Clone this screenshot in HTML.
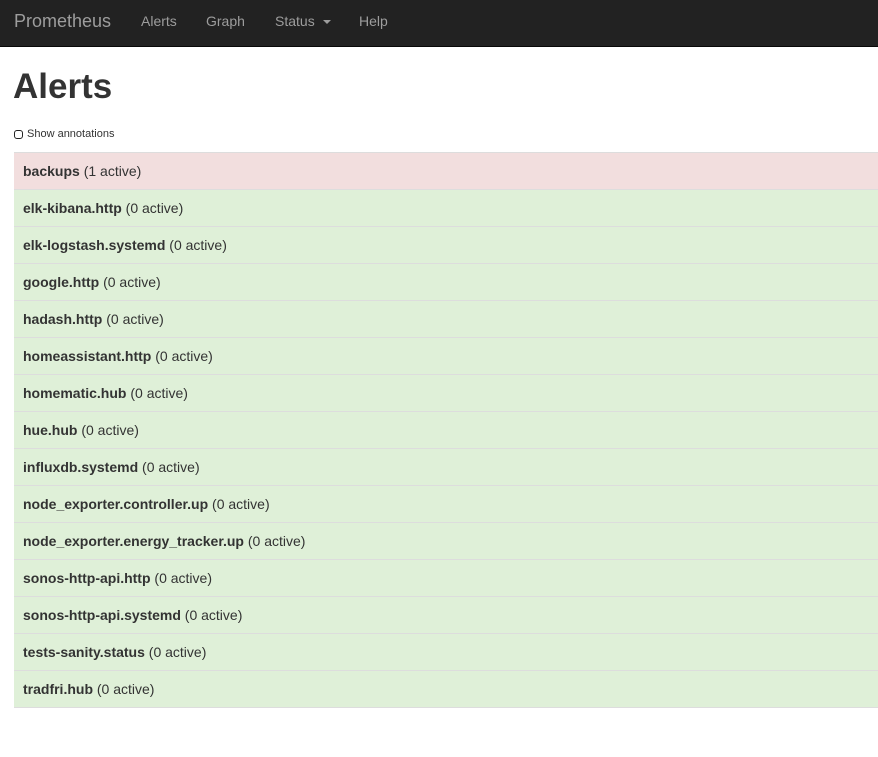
<!DOCTYPE html>
<html><head><style>
body{margin:0;font-family:"Liberation Sans",Arial,sans-serif;color:#333;font-size:14px;background:#fff;overflow:hidden;width:878px;height:757px}
.nav{height:46px;background:#222;border-bottom:1px solid #080808;position:relative}
.nav span{position:absolute;top:13px;color:#9d9d9d;font-size:14px}
.brand{font-size:18px!important;top:11px!important;left:14px}
h1{font-size:35px;font-weight:bold;margin:0;position:absolute;top:67px;left:13px;line-height:40px}
.ann{position:absolute;top:128px;left:14px;font-size:11px;display:flex;align-items:center}
.cb{width:7px;height:7px;border:1.5px solid #222;border-radius:3px;margin-right:4px}
.list{position:absolute;top:152px;left:14px;width:880px}
.row{height:36px;line-height:37px;border-top:1px solid #ddd;padding-left:9px;background:#dff0d8;font-size:14px}
.row.red{background:#f2dede}
.row:last-child{border-bottom:1px solid #ddd}
b{font-weight:bold}
.caret{display:inline-block;width:0;height:0;border-left:4px solid transparent;border-right:4px solid transparent;border-top:4px solid #9d9d9d;vertical-align:middle;margin-left:4px}
</style></head><body>
<div class="nav">
<span class="brand">Prometheus</span>
<span style="left:141px">Alerts</span>
<span style="left:206px">Graph</span>
<span style="left:275px">Status <i class="caret"></i></span>
<span style="left:359px">Help</span>
</div>
<h1>Alerts</h1>
<div class="ann"><div class="cb"></div>Show annotations</div>
<div class="list">
<div class="row red"><b>backups</b> (1 active)</div>
<div class="row"><b>elk-kibana.http</b> (0 active)</div>
<div class="row"><b>elk-logstash.systemd</b> (0 active)</div>
<div class="row"><b>google.http</b> (0 active)</div>
<div class="row"><b>hadash.http</b> (0 active)</div>
<div class="row"><b>homeassistant.http</b> (0 active)</div>
<div class="row"><b>homematic.hub</b> (0 active)</div>
<div class="row"><b>hue.hub</b> (0 active)</div>
<div class="row"><b>influxdb.systemd</b> (0 active)</div>
<div class="row"><b>node_exporter.controller.up</b> (0 active)</div>
<div class="row"><b>node_exporter.energy_tracker.up</b> (0 active)</div>
<div class="row"><b>sonos-http-api.http</b> (0 active)</div>
<div class="row"><b>sonos-http-api.systemd</b> (0 active)</div>
<div class="row"><b>tests-sanity.status</b> (0 active)</div>
<div class="row"><b>tradfri.hub</b> (0 active)</div>
</div>
</body></html>
